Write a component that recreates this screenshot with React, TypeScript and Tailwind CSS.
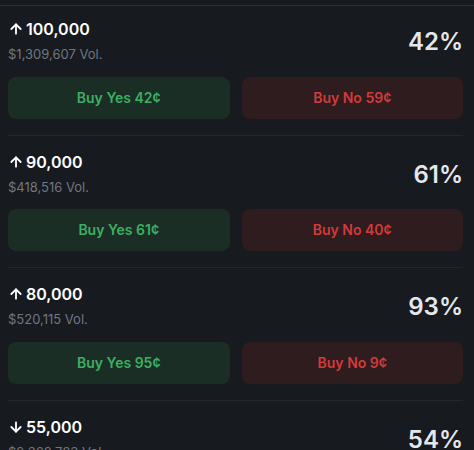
import { ArrowUp, ArrowDown } from 'lucide-react';

const markets = [
    { dir: 'up', strike: '100,000', vol: '$1,309,607', pct: 42, yes: 42, no: 59 },
    { dir: 'up', strike: '90,000', vol: '$418,516', pct: 61, yes: 61, no: 40 },
    { dir: 'up', strike: '80,000', vol: '$520,115', pct: 93, yes: 95, no: 9 },
    { dir: 'down', strike: '55,000', vol: '$2,368,723', pct: 54, yes: 54, no: 47 },
];

export default function App() {
    return (
        <div className="h-[450px] overflow-hidden bg-[#171a1f] font-['Inter',sans-serif]">
            {/* header edge */}
            <div className="h-[5px]" />
            <div className="h-px bg-[#2a2e35]" />

            <div className="pl-2 pr-[11px]">
                {markets.map((m, i) => (
                    <div
                        key={m.strike}
                        className={`${i > 0 ? 'border-t border-[#23272e] pt-[14px]' : 'pt-[11px]'} pb-4`}
                    >
                        <div className="flex items-start justify-between">
                            <div>
                                <div className="flex items-center gap-0.5 text-base leading-6 font-semibold text-white">
                                    {m.dir === 'up' ? (
                                        <ArrowUp size={16} strokeWidth={2.75} />
                                    ) : (
                                        <ArrowDown size={16} strokeWidth={2.75} />
                                    )}
                                    <span>{m.strike}</span>
                                </div>
                                <div className="mt-[5px] text-[13px] leading-4 text-[#6f7782]">
                                    {m.vol} Vol.
                                </div>
                            </div>
                            <div className="mt-[9px] text-2xl leading-8 font-semibold text-[#e4e7ec]">
                                {m.pct}%
                            </div>
                        </div>

                        <div className="mt-[14.5px] grid grid-cols-2 gap-3">
                            <button className="h-[42px] rounded-lg bg-[#1b2e25] text-sm font-semibold text-[#3dae63]">
                                Buy Yes {m.yes}¢
                            </button>
                            <button className="h-[42px] rounded-lg bg-[#2e1c1e] text-sm font-semibold text-[#d33a3a]">
                                Buy No {m.no}¢
                            </button>
                        </div>
                    </div>
                ))}
            </div>
        </div>
    );
}
